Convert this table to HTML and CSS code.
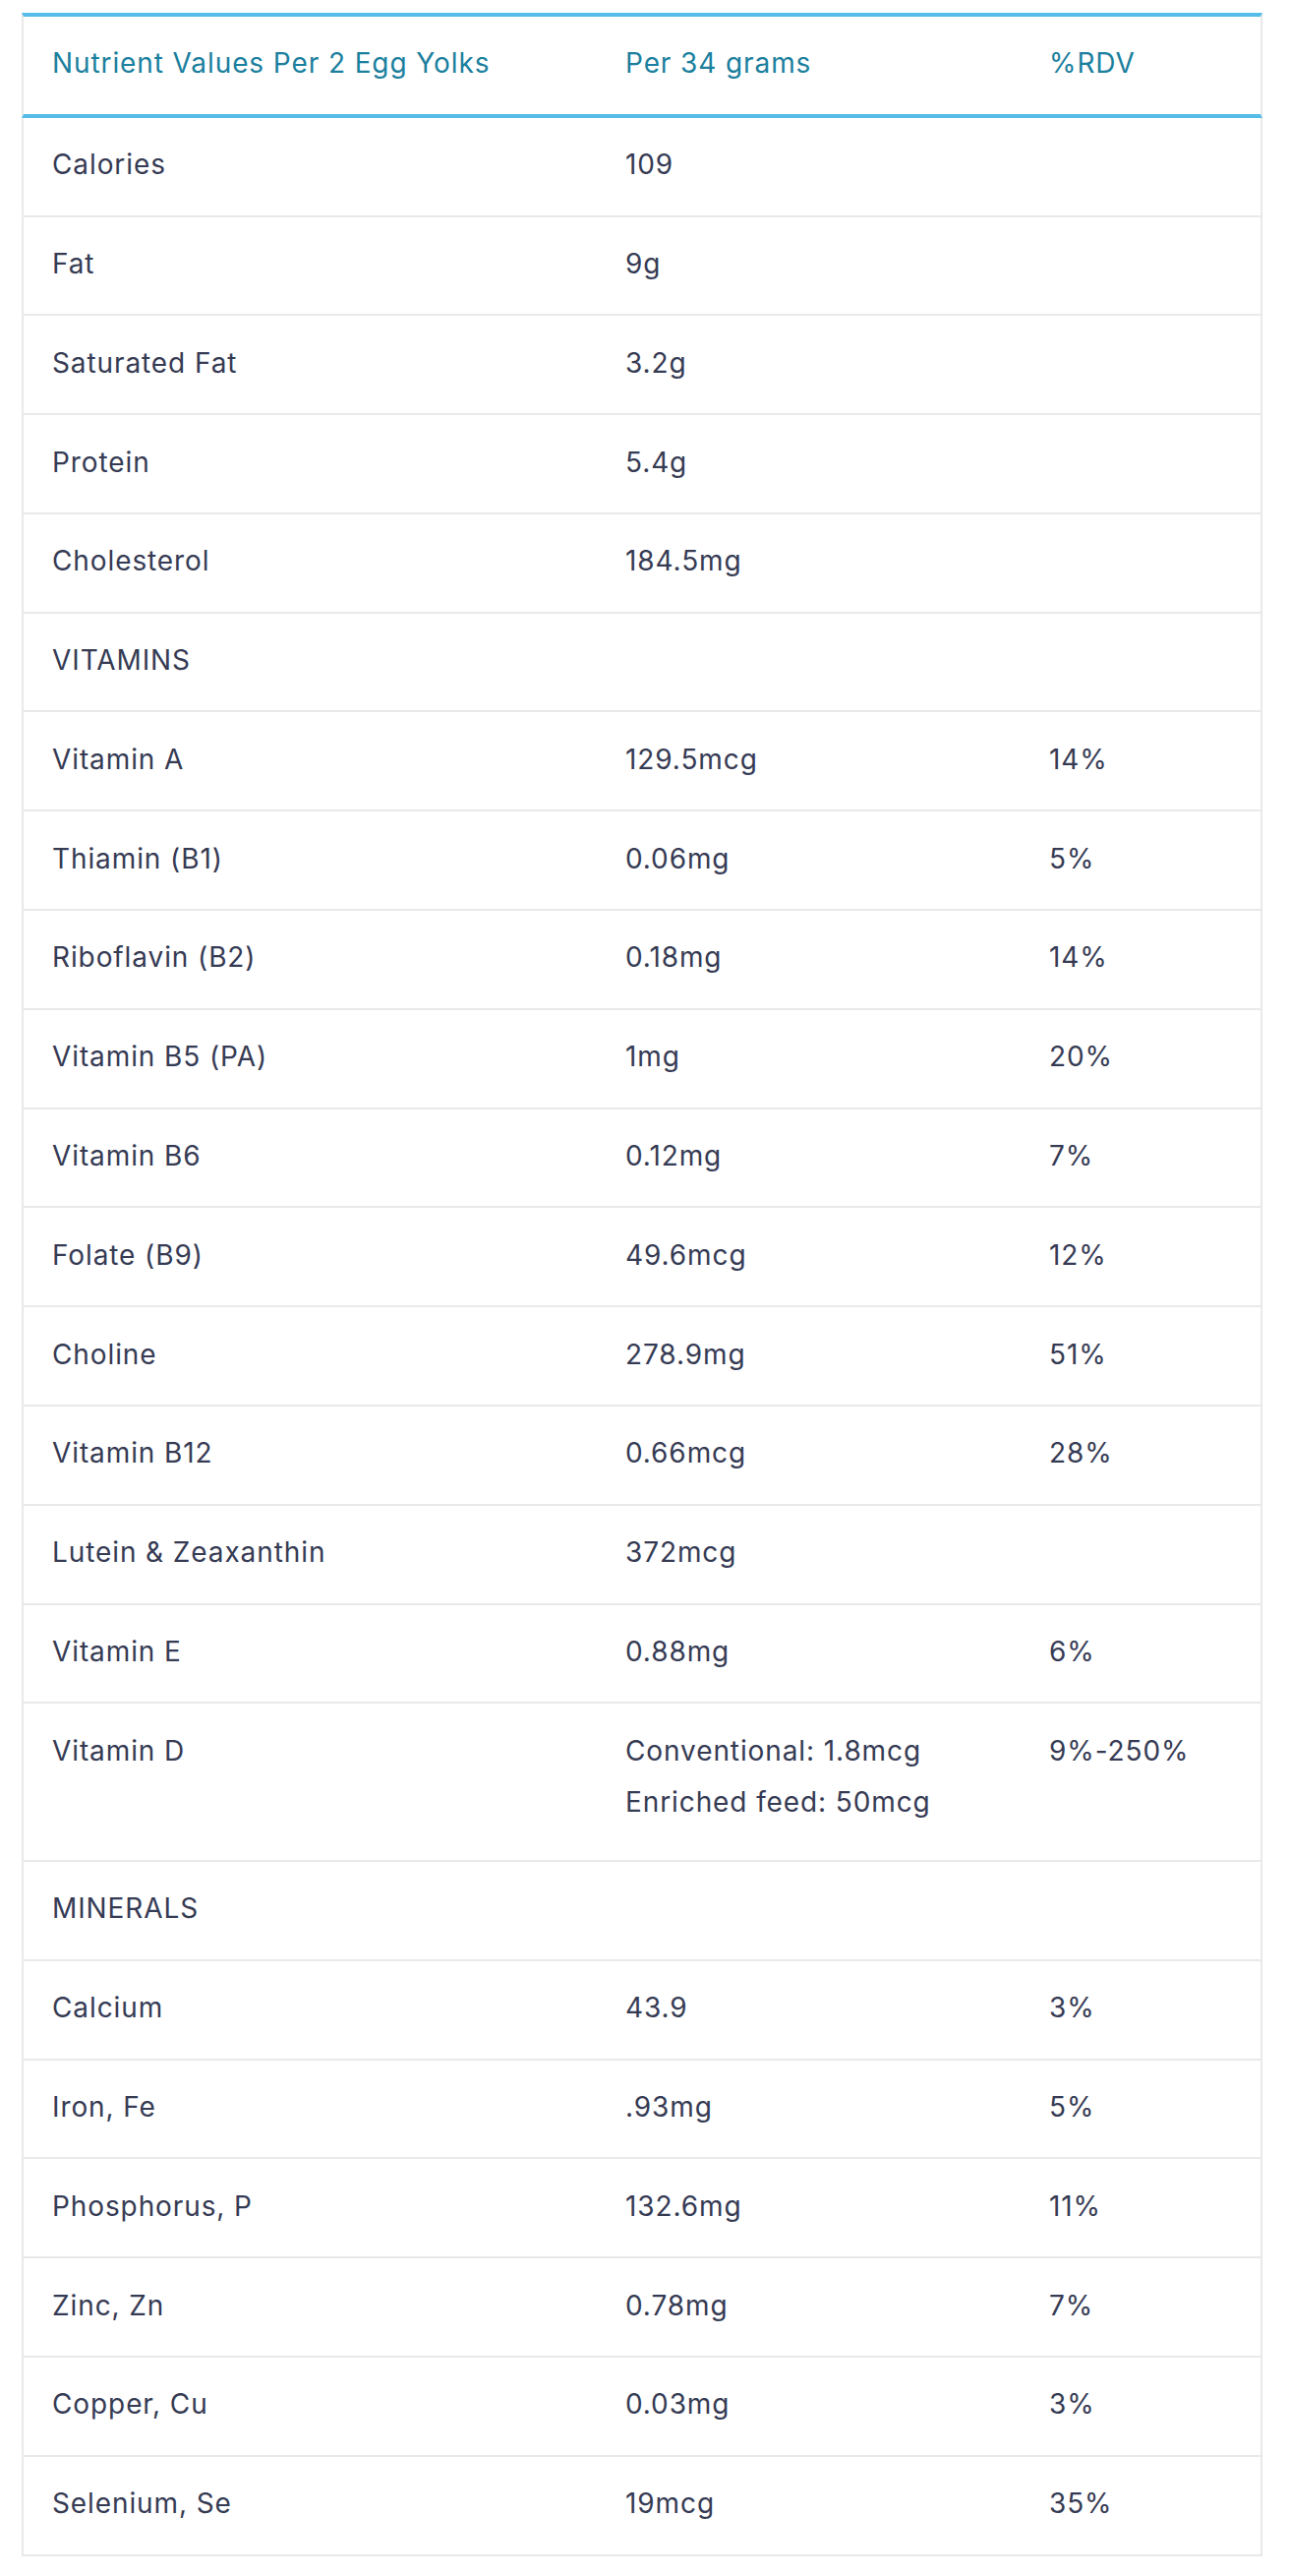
FILE: index.html
```html
<!DOCTYPE html>
<html lang="en">
<head>
<meta charset="utf-8">
<title>Egg Yolk Nutrients</title>
<link rel="stylesheet" href="styles.css">
</head>
<body>
<table class="nutrition">
  <colgroup>
    <col class="c-name">
    <col class="c-amount">
    <col class="c-rdv">
  </colgroup>
  <thead>
    <tr><th>Nutrient Values Per 2 Egg Yolks</th><th>Per 34 grams</th><th>%RDV</th></tr>
  </thead>
  <tbody>
    <tr><td>Calories</td><td>109</td><td></td></tr>
    <tr><td>Fat</td><td>9g</td><td></td></tr>
    <tr><td>Saturated Fat</td><td>3.2g</td><td></td></tr>
    <tr><td>Protein</td><td>5.4g</td><td></td></tr>
    <tr><td>Cholesterol</td><td>184.5mg</td><td></td></tr>
    <tr><td>VITAMINS</td><td></td><td></td></tr>
    <tr><td>Vitamin A</td><td>129.5mcg</td><td>14%</td></tr>
    <tr><td>Thiamin (B1)</td><td>0.06mg</td><td>5%</td></tr>
    <tr><td>Riboflavin (B2)</td><td>0.18mg</td><td>14%</td></tr>
    <tr><td>Vitamin B5 (PA)</td><td>1mg</td><td>20%</td></tr>
    <tr><td>Vitamin B6</td><td>0.12mg</td><td>7%</td></tr>
    <tr><td>Folate (B9)</td><td>49.6mcg</td><td>12%</td></tr>
    <tr><td>Choline</td><td>278.9mg</td><td>51%</td></tr>
    <tr><td>Vitamin B12</td><td>0.66mcg</td><td>28%</td></tr>
    <tr><td>Lutein &amp; Zeaxanthin</td><td>372mcg</td><td></td></tr>
    <tr><td>Vitamin E</td><td>0.88mg</td><td>6%</td></tr>
    <tr class="tall"><td>Vitamin D</td><td><span class="line">Conventional: 1.8mcg</span><span class="line">Enriched feed: 50mcg</span></td><td>9%-250%</td></tr>
    <tr><td>MINERALS</td><td></td><td></td></tr>
    <tr><td>Calcium</td><td>43.9</td><td>3%</td></tr>
    <tr><td>Iron, Fe</td><td>.93mg</td><td>5%</td></tr>
    <tr><td>Phosphorus, P</td><td>132.6mg</td><td>11%</td></tr>
    <tr><td>Zinc, Zn</td><td>0.78mg</td><td>7%</td></tr>
    <tr><td>Copper, Cu</td><td>0.03mg</td><td>3%</td></tr>
    <tr><td>Selenium, Se</td><td>19mcg</td><td>35%</td></tr>
  </tbody>
</table>
</body>
</html>
```

FILE: styles.css
```css
html, body {
  margin: 0;
  padding: 0;
  background: #ffffff;
}

body {
  padding: 13px 27px 17px 22px;
  font-family: Inter, Lato, "Open Sans", Arial, sans-serif;
  font-size: 28px;
  letter-spacing: 0.9px;
  color: #363b54;
}

.nutrition {
  width: 1262px;
  table-layout: fixed;
  border-collapse: separate;
  border-spacing: 0;
}

.c-name { width: 585px; }
.c-amount { width: 431px; }
.c-rdv { width: 246px; }

.nutrition th,
.nutrition td {
  text-align: left;
  vertical-align: top;
  font-weight: 400;
  line-height: 52px;
  padding: 21.4px 0 25.4px 29px;
}

.nutrition th {
  color: #1b7f9e;
  border-top: 4px solid #56bde8;
  border-bottom: 4px solid #56bde8;
}

.nutrition td {
  border-bottom: 2px solid #e9e9e9;
}

.nutrition th:first-child,
.nutrition td:first-child {
  border-left: 2px solid #e9e9e9;
}

.nutrition th:last-child,
.nutrition td:last-child {
  border-right: 2px solid #e9e9e9;
}

.nutrition .line {
  display: block;
}

.nutrition .tall td {
  padding-bottom: 33.4px;
}
```
